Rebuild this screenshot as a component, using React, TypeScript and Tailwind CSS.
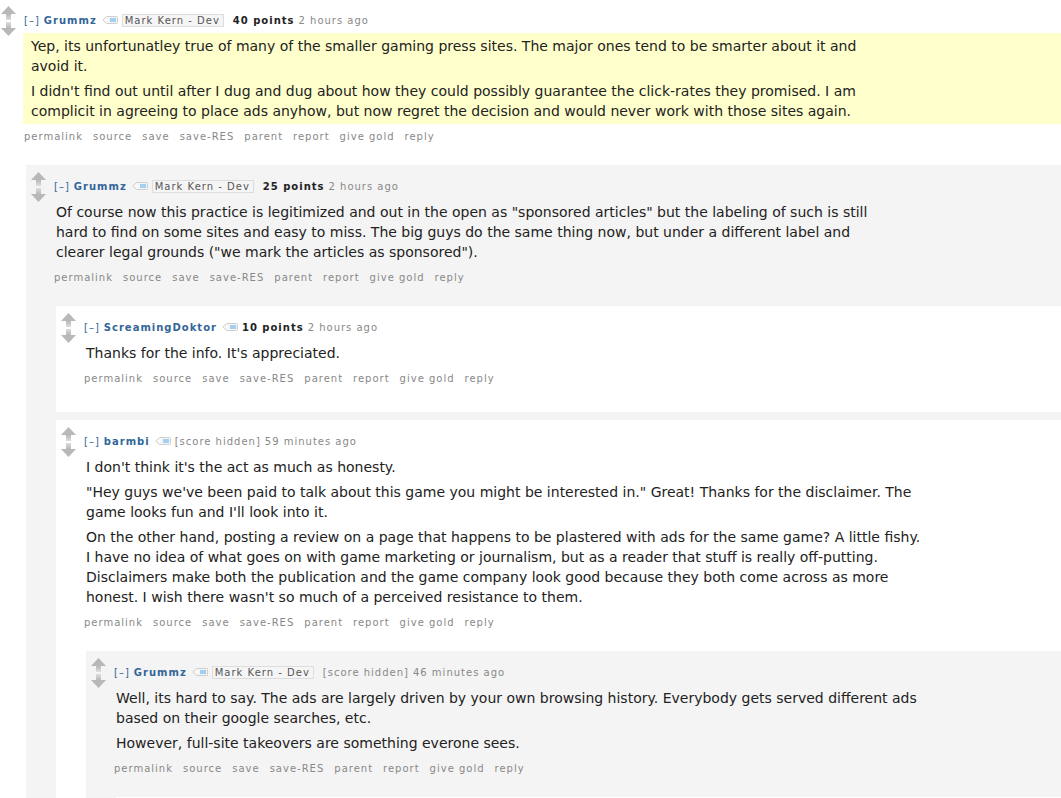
import type { ReactNode } from 'react';
import clsx from 'clsx';

const ACTIONS = ['permalink', 'source', 'save', 'save-RES', 'parent', 'report', 'give gold', 'reply'];

function VoteArrow({ down = false }: { down?: boolean }) {
  const id = down ? 'stem-down' : 'stem-up';
  return (
    <svg width="15" height="14" viewBox="0 0 15 14" className={clsx('block', down && 'rotate-180')}>
      <defs>
        <linearGradient id={id} x1="0" y1="0" x2="0" y2="1">
          <stop offset="0" stopColor="#b8b8b8" />
          <stop offset="1" stopColor="#dedede" />
        </linearGradient>
      </defs>
      <path d="M7.5 0L15 8H0z" fill="#b8b8b8" />
      <rect x="5" y="8" width="5" height="6" fill={`url(#${id})`} />
    </svg>
  );
}

function TagIcon() {
  return (
    <svg width="16" height="8" viewBox="0 0 16 8" className="block">
      <path d="M4.500 .5h10q1 0 1 1v5q0 1-1 1h-10L.8 4z" fill="#f5f5f5" stroke="#cfcfcf" />
      <circle cx="4.500" cy="4" r="1" fill="#fff" />
      <rect x="8" y="2" width="6" height="4" fill="#a3cff0" />
    </svg>
  );
}

type CommentProps = {
  author: string;
  flair?: string;
  points?: string;
  age: string;
  body: string[];
  variant?: 'root' | 'gray' | 'white';
  children?: ReactNode;
};

function Comment({ author, flair, points, age, body, variant = 'white', children }: CommentProps) {
  const root = variant === 'root';

  return (
    <article
      className={clsx(
        root ? 'pl-px pt-[6px]' : 'pl-[5px] pt-[7px]',
        variant === 'gray' ? 'bg-[#f4f4f4]' : 'bg-white',
        !children && 'pb-6',
      )}
    >
      <div className="flex items-start gap-[7px]">
        <div className="flex w-[15px] shrink-0 flex-col gap-[2px]">
          <button type="button" aria-label="upvote">
            <VoteArrow />
          </button>
          <button type="button" aria-label="downvote">
            <VoteArrow down />
          </button>
        </div>

        <div className="min-w-0 flex-1 pt-1">
          <header className="flex h-5 items-center gap-1 pl-px text-[10px] tracking-widest text-[#888]">
            <a href="#" className="text-[#369]">[–]</a>
            <a href="#" className="font-bold text-[#369]">{author}</a>
            <a href="#" aria-label="tag user" className="ml-px">
              <TagIcon />
            </a>
            {flair && (
              <span className="mr-[5px] border border-[#ddd] bg-[#f5f5f5] pl-[2px] pr-[3px] leading-[11px] text-[#555]">
                {flair}
              </span>
            )}
            {points ? <span className="font-bold text-[#222]">{points}</span> : <span>[score hidden]</span>}
            <time>{age}</time>
          </header>

          <div
            className={clsx(
              'mt-[3px] py-[3px] text-[14px] leading-5 text-[#222]',
              root ? 'bg-[#ffffcc] pl-2' : 'pl-[3px]',
            )}
          >
            <div className="flex max-w-[840px] flex-col gap-[5px]">
              {body.map((text) => (
                <p key={text}>{text}</p>
              ))}
            </div>
          </div>

          <ul className="mt-[2px] flex h-5 items-center gap-[10px] pl-px text-[10px] tracking-widest text-[#888]">
            {ACTIONS.map((action) => (
              <li key={action}>
                <a href="#">{action}</a>
              </li>
            ))}
          </ul>
        </div>
      </div>

      {children && <div className="ml-[25px] mt-[19px] flex flex-col gap-2">{children}</div>}
    </article>
  );
}

export default function App() {
  return (
    <main className="bg-white font-['DejaVu_Sans',sans-serif]">
      <Comment
        variant="root"
        author="Grummz"
        flair="Mark Kern - Dev"
        points="40 points"
        age="2 hours ago"
        body={[
          'Yep, its unfortunatley true of many of the smaller gaming press sites. The major ones tend to be smarter about it and avoid it.',
          "I didn't find out until after I dug and dug about how they could possibly guarantee the click-rates they promised. I am complicit in agreeing to place ads anyhow, but now regret the decision and would never work with those sites again.",
        ]}
      >
        <Comment
          variant="gray"
          author="Grummz"
          flair="Mark Kern - Dev"
          points="25 points"
          age="2 hours ago"
          body={[
            'Of course now this practice is legitimized and out in the open as "sponsored articles" but the labeling of such is still hard to find on some sites and easy to miss. The big guys do the same thing now, but under a different label and clearer legal grounds ("we mark the articles as sponsored").',
          ]}
        >
          <Comment
            author="ScreamingDoktor"
            points="10 points"
            age="2 hours ago"
            body={["Thanks for the info. It's appreciated."]}
          />
          <Comment
            author="barmbi"
            age="59 minutes ago"
            body={[
              "I don't think it's the act as much as honesty.",
              '"Hey guys we\'ve been paid to talk about this game you might be interested in." Great! Thanks for the disclaimer. The game looks fun and I\'ll look into it.',
              "On the other hand, posting a review on a page that happens to be plastered with ads for the same game? A little fishy. I have no idea of what goes on with game marketing or journalism, but as a reader that stuff is really off-putting. Disclaimers make both the publication and the game company look good because they both come across as more honest. I wish there wasn't so much of a perceived resistance to them.",
            ]}
          >
            <Comment
              variant="gray"
              author="Grummz"
              flair="Mark Kern - Dev"
              age="46 minutes ago"
              body={[
                'Well, its hard to say. The ads are largely driven by your own browsing history. Everybody gets served different ads based on their google searches, etc.',
                'However, full-site takeovers are something everone sees.',
              ]}
            >
              <div className="h-px bg-white" />
            </Comment>
          </Comment>
        </Comment>
      </Comment>
    </main>
  );
}
